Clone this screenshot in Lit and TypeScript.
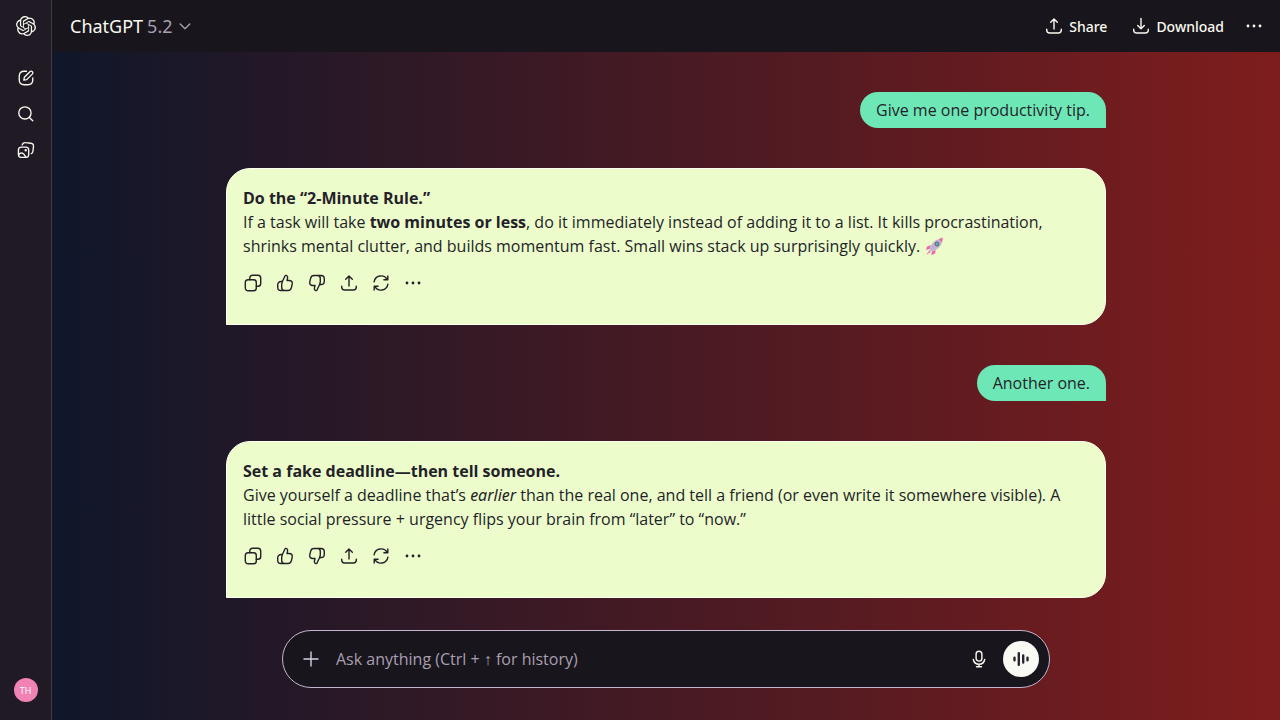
import { LitElement, html, svg, css, nothing, TemplateResult } from "lit";
import { customElement, property } from "lit/decorators.js";

type Glyph = { body: TemplateResult };

const glyphs: Record<string, Glyph> = {
  edit: { body: svg`<path d="M10.500 2.500H8C4.200 2.500 2.500 4.200 2.500 8v4.200c0 3.700 1.700 5.300 5.500 5.300h4.200c3.700 0 5.300-1.600 5.300-5.300V9.800"/><path d="M7.600 12.400l.6-3.200 6.400-6.400a1.850 1.850 0 0 1 2.600 2.600l-6.400 6.400z"/>` },
  search: { body: svg`<circle cx="8.800" cy="8.800" r="6.800"/><path d="M13.800 13.800L17.500 17.500"/>` },
  library: { body: svg`<rect x="1.600" y="6.800" width="11.400" height="11.400" rx="3.200"/><path d="M5.800 4.400C6.300 2.300 7.300 1.500 9.400 1.800l5.900.7c2.400.3 3.300 1.400 3 3.700l-.6 5.200c-.2 1.500-.8 2.300-1.900 2.600"/><circle cx="9.700" cy="10.300" r=".6"/><path d="M2 15c2.600-3 5.500-2 7.800 3"/>` },
  upload: { body: svg`<path d="M2.700 13.300v.7c0 2 1 3 3 3h8.600c2 0 3-1 3-3v-.7"/><path d="M10 13V3M6.700 6.300L10 3l3.300 3.300"/>` },
  download: { body: svg`<path d="M2.700 13.300v.7c0 2 1 3 3 3h8.600c2 0 3-1 3-3v-.7"/><path d="M10 2.500V12.800M6.700 9.500L10 12.800l3.300-3.300"/>` },
  more: { body: svg`<g fill="currentColor" stroke="none"><circle cx="4" cy="10" r="1.400"/><circle cx="10" cy="10" r="1.400"/><circle cx="16" cy="10" r="1.400"/></g>` },
  copy: { body: svg`<rect x="2.300" y="6.800" width="11" height="11" rx="2.800"/><path d="M6.800 6.800V5.100c0-1.900 1-2.800 2.800-2.800h5.300c1.900 0 2.800 1 2.800 2.800v5.300c0 1.900-1 2.800-2.800 2.800H13.300"/>` },
  up: { body: svg`<path d="M8.500 17.500H6A3.300 3.300 0 0 1 2.700 14.200v-2.400A3.300 3.300 0 0 1 6 8.500c1 0 1.600-.5 2-1.300l2.100-4.400c.4-.9 3-.5 2.500 2L12 7.500h2.200c2.300 0 3.500 1.500 3 3.700l-.8 3.500c-.4 1.900-1.500 2.800-3.400 2.800H9.500c-1.900 0-2.800-1-2.800-2.900v-3c0-1.300.3-2.100.8-3.100"/>` },
  down: { body: svg`<path d="M11.500 2.500H14a3.300 3.300 0 0 1 3.300 3.300v2.400A3.300 3.300 0 0 1 14 11.500c-1 0-1.600.5-2 1.300l-2.100 4.400c-.4.9-3 .5-2.500-2l.6-2.700H5.800c-2.300 0-3.500-1.500-3-3.700l.8-3.500C4 3.400 5.100 2.500 7 2.500h3.500c1.900 0 2.800 1 2.800 2.900v3c0 1.300-.3 2.100-.8 3.100"/>` },
  retry: { body: svg`<path d="M3.100 8.800A7 7 0 0 1 16.200 6.600M16.800 2.900v3.900h-3.900M16.900 11.200A7 7 0 0 1 3.800 13.400M3.200 17.100v-3.900h3.900"/>` },
  plus: { body: svg`<path d="M10 3v14M3 10h14"/>` },
  mic: { body: svg`<rect x="7.100" y="2.300" width="5.800" height="9.800" rx="2.900"/><path d="M4.300 10.500a5.800 5.800 0 0 0 11.400 0M10 15v2.700M7.500 17.700h5"/>` },
  voice: { body: svg`<g stroke-width="2.400"><path d="M3.500 8.800v2.400M7.800 4.300v11.400M12.200 6.500v7M16.500 8.800v2.400"/></g>` },
  chevron: { body: svg`<path d="M4 7.500L10 13.500l6-6"/>` },
};

const icon = (name: string) =>
  html`<svg class="icon ${name}" viewBox="0 0 20 20" aria-hidden="true">${glyphs[name].body}</svg>`;

const shared = css`
  button {
    display: inline-flex;
    align-items: center;
    justify-content: center;
    padding: 0;
    border: 0;
    background: none;
    color: inherit;
    font: inherit;
    cursor: pointer;
  }
  .icon {
    width: 20px;
    height: 20px;
    flex: none;
    fill: none;
    stroke: currentColor;
    stroke-width: 1.4;
    stroke-linecap: round;
    stroke-linejoin: round;
  }
`;

@customElement("side-rail")
export class SideRail extends LitElement {
  static styles = [
    shared,
    css`
      :host {
        display: flex;
        flex-direction: column;
        align-items: center;
        box-sizing: border-box;
        width: 52px;
        padding: 8px 0 18px;
        background: #1f1a24;
        border-right: 1px solid #3d3842;
        color: #fafaf0;
      }
      .rail {
        width: 36px;
        height: 36px;
      }
      .logo {
        width: 20px;
        height: 20px;
        fill: currentColor;
      }
      nav {
        display: flex;
        flex-direction: column;
        margin-top: 16px;
      }
      .rail .icon {
        width: 18px;
        height: 18px;
        stroke-width: 1.5;
      }
      .avatar {
        width: 24px;
        height: 24px;
        margin-top: auto;
        border-radius: 50%;
        background: #f082b4;
        color: #fff;
        font-size: 9px;
      }
    `,
  ];
  render() {
    return html`
      <button class="rail" aria-label="Home">
        <svg class="logo" viewBox="0 0 24 24" aria-hidden="true">
          <path d="M22.2819 9.8211a5.9847 5.9847 0 0 0-.5157-4.9108 6.0462 6.0462 0 0 0-6.5098-2.9A6.0651 6.0651 0 0 0 4.9807 4.1818a5.9847 5.9847 0 0 0-3.9977 2.9 6.0462 6.0462 0 0 0 .7427 7.0966 5.98 5.98 0 0 0 .511 4.9107 6.051 6.051 0 0 0 6.5146 2.9001A5.9847 5.9847 0 0 0 13.2599 24a6.0557 6.0557 0 0 0 5.7718-4.2058 5.9894 5.9894 0 0 0 3.9977-2.9001 6.0557 6.0557 0 0 0-.7475-7.0729zm-9.022 12.6081a4.4755 4.4755 0 0 1-2.8764-1.0408l.1419-.0804 4.7783-2.7582a.7948.7948 0 0 0 .3927-.6813v-6.7369l2.02 1.1686a.071.071 0 0 1 .038.052v5.5826a4.504 4.504 0 0 1-4.4945 4.4944zm-9.6607-4.1254a4.4708 4.4708 0 0 1-.5346-3.0137l.142.0852 4.783 2.7582a.7712.7712 0 0 0 .7806 0l5.8428-3.3685v2.3324a.0804.0804 0 0 1-.0332.0615L9.74 19.9502a4.4992 4.4992 0 0 1-6.1408-1.6464zM2.3408 7.8956a4.485 4.485 0 0 1 2.3655-1.9728V11.6a.7664.7664 0 0 0 .3879.6765l5.8144 3.3543-2.0201 1.1685a.0757.0757 0 0 1-.071 0l-4.8303-2.7865A4.504 4.504 0 0 1 2.3408 7.872zm16.5963 3.8558L13.1038 8.364 15.1192 7.2a.0757.0757 0 0 1 .071 0l4.8303 2.7913a4.4944 4.4944 0 0 1-.6765 8.1042v-5.6772a.79.79 0 0 0-.407-.667zm2.0107-3.0231l-.142-.0852-4.7735-2.7818a.7759.7759 0 0 0-.7854 0L9.409 9.2297V6.8974a.0662.0662 0 0 1 .0284-.0615l4.8303-2.7866a4.4992 4.4992 0 0 1 6.6802 4.66zM8.3065 12.863l-2.02-1.1638a.0804.0804 0 0 1-.038-.0567V6.0742a4.4992 4.4992 0 0 1 7.3757-3.4537l-.142.0805L8.704 5.459a.7948.7948 0 0 0-.3927.6813zm1.0976-2.3654l2.602-1.4998 2.6069 1.4998v2.9994l-2.5974 1.4997-2.6067-1.4997Z"/>
        </svg>
      </button>
      <nav>
        <button class="rail" aria-label="New chat">${icon("edit")}</button>
        <button class="rail" aria-label="Search">${icon("search")}</button>
        <button class="rail" aria-label="Library">${icon("library")}</button>
      </nav>
      <button class="avatar">TH</button>
    `;
  }
}

@customElement("top-bar")
export class TopBar extends LitElement {
  static styles = [
    shared,
    css`
      :host {
        display: flex;
        align-items: center;
        justify-content: space-between;
        box-sizing: border-box;
        height: 52px;
        padding: 0 8px 0 18px;
        background: #18151c;
        color: #fafaf0;
        font-family: "Noto Sans", "Open Sans", sans-serif;
      }
      .model {
        gap: 4px;
        font-size: 18px;
        line-height: 28px;
      }
      .version,
      .chevron {
        color: #a89fb0;
      }
      .icon.chevron {
        width: 16px;
        height: 16px;
        stroke-width: 1.7;
      }
      .actions {
        display: flex;
        align-items: center;
      }
      .action {
        gap: 5px;
        height: 36px;
        padding: 0 12px;
        font-size: 14px;
        font-weight: 500;
      }
      .square {
        width: 36px;
        height: 36px;
      }
    `,
  ];
  render() {
    return html`
      <button class="model"><span>ChatGPT</span><span class="version">5.2</span>${icon("chevron")}</button>
      <div class="actions">
        <button class="action">${icon("upload")}Share</button>
        <button class="action">${icon("download")}Download</button>
        <button class="square" aria-label="More">${icon("more")}</button>
      </div>
    `;
  }
}

@customElement("chat-message")
export class ChatMessage extends LitElement {
  @property({ reflect: true }) from: "user" | "assistant" = "user";
  static styles = [
    shared,
    css`
      :host {
        display: block;
        box-sizing: border-box;
        color: #241f29;
        font-size: 16px;
        line-height: 24px;
      }
      :host([from="user"]) {
        align-self: flex-end;
        max-width: 70%;
        padding: 6px 16px;
        border-radius: 18px 18px 0 18px;
        background: #6ee7b7;
      }
      :host([from="assistant"]) {
        padding: 17px 16px 25px;
        border: 1px solid #fcfff0;
        border-radius: 24px 24px 24px 0;
        background: #ecfccb;
      }
      .actions {
        display: flex;
        margin: 9px 0 0 -6px;
      }
      .actions button {
        width: 32px;
        height: 32px;
      }
    `,
  ];
  render() {
    const tools = [
      ["copy", "Copy"],
      ["up", "Good response"],
      ["down", "Bad response"],
      ["upload", "Share"],
      ["retry", "Try again"],
      ["more", "More actions"],
    ];
    return html`<slot></slot>${this.from === "assistant"
        ? html`<div class="actions">
            ${tools.map(([name, label]) => html`<button aria-label=${label}>${icon(name)}</button>`)}
          </div>`
        : nothing}`;
  }
}

@customElement("chat-composer")
export class ChatComposer extends LitElement {
  static styles = [
    shared,
    css`
      :host {
        display: block;
        width: 100%;
        max-width: 768px;
      }
      form {
        display: flex;
        align-items: center;
        padding: 10px;
        border: 1px solid #c4b5d0;
        border-radius: 29px;
        background: #18151c;
        color: #fafaf0;
      }
      button {
        width: 36px;
        height: 36px;
      }
      .add {
        color: #d8d0e0;
      }
      input {
        flex: 1;
        min-width: 0;
        padding: 0 7px;
        border: 0;
        outline: 0;
        background: none;
        color: inherit;
        font-family: "Open Sans", "Liberation Sans", sans-serif;
        font-size: 16px;
        line-height: 24px;
      }
      input::placeholder {
        color: #a89fb0;
        opacity: 1;
      }
      .talk {
        margin-left: 6px;
        border-radius: 50%;
        background: #fafaf4;
        color: #29242e;
      }
    `,
  ];
  render() {
    return html`<form>
      <button type="button" class="add" aria-label="Add files">${icon("plus")}</button>
      <input aria-label="Message" placeholder="Ask anything (Ctrl + ↑ for history)" />
      <button type="button" aria-label="Dictate">${icon("mic")}</button>
      <button type="button" class="talk" aria-label="Voice mode">${icon("voice")}</button>
    </form>`;
  }
}

@customElement("app-root")
export class AppRoot extends LitElement {
  static styles = css`
    :host {
      display: flex;
      min-height: 100vh;
      background: #18151c;
      font-family: "Open Sans", "Noto Sans", sans-serif;
    }
    .page {
      display: flex;
      flex: 1;
      flex-direction: column;
      min-width: 0;
    }
    main {
      display: flex;
      flex: 1;
      flex-direction: column;
      align-items: center;
      justify-content: space-between;
      padding: 40px 32px 32px;
      background: linear-gradient(to right, #0f172a, #7f1d1d);
    }
    .thread {
      display: flex;
      flex-direction: column;
      gap: 40px;
      width: 100%;
      max-width: 880px;
    }
    em {
      font-family: "Noto Sans", sans-serif;
    }
    .rocket {
      width: 20px;
      height: 20px;
      vertical-align: -4px;
    }
  `;
  render() {
    return html`
      <side-rail></side-rail>
      <div class="page">
        <top-bar></top-bar>
        <main>
          <div class="thread">
            <chat-message from="user">Give me one productivity tip.</chat-message>
            <chat-message from="assistant">
              <strong>Do the “2-Minute Rule.”</strong><br />
              If a task will take <strong>two minutes or less</strong>, do it immediately instead of adding it to a
              list. It kills procrastination, shrinks mental clutter, and builds momentum fast. Small wins stack up
              surprisingly quickly.
              <svg class="rocket" viewBox="0 0 20 20" role="img" aria-label="rocket">
                <path fill="#ec6aae" d="M6.500 9L3 10.500 2 14l4.500-1.500zM12 14.500L10.500 18 7 19l1.500-4.500z" />
                <path fill="#ec86b8" d="M5.500 14L2 19l5-3z" />
                <path fill="#c3b2d2" d="M5.500 13.500C7 8 10 4.500 15 3l3 3c-1.500 5-5 8-10.500 9.500z" />
                <path fill="#ec6aae" d="M14.500 3L19 1.500 18 6.500z" />
                <circle cx="13" cy="8" r="2" fill="#52bfa4" stroke="#6a5a76" />
              </svg>
            </chat-message>
            <chat-message from="user">Another one.</chat-message>
            <chat-message from="assistant">
              <strong>Set a fake deadline—then tell someone.</strong><br />
              Give yourself a deadline that’s <em>earlier</em> than the real one, and tell a friend (or even write it
              somewhere visible). A little social pressure + urgency flips your brain from “later” to “now.”
            </chat-message>
          </div>
          <chat-composer></chat-composer>
        </main>
      </div>
    `;
  }
}
